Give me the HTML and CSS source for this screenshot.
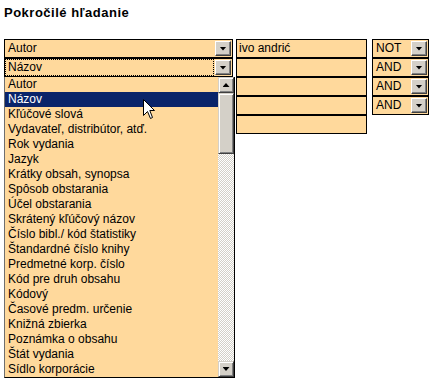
FILE: index.html
```html
<!DOCTYPE html>
<html lang="sk">
<head>
    <meta charset="UTF-8">
    <title>Pokročilé hľadanie</title>
    <link rel="stylesheet" href="styles.css">
</head>
<body>
    <h1 class="title">Pokročilé hľadanie</h1>

    <div class="search-form">
        <div class="col col-fields">
            <div class="select"><span class="select-text">Autor</span><span class="select-btn"><i class="arrow-down"></i></span></div>
            <div class="select select-focus"><span class="select-text">Názov</span><span class="select-btn"><i class="arrow-down"></i></span></div>

            <!-- open dropdown of the second select -->
            <div class="listbox">
                <ul class="options">
                    <li>Autor</li>
                    <li class="selected">Názov</li>
                    <li>Kľúčové slová</li>
                    <li>Vydavateľ, distribútor, atď.</li>
                    <li>Rok vydania</li>
                    <li>Jazyk</li>
                    <li>Krátky obsah, synopsa</li>
                    <li>Spôsob obstarania</li>
                    <li>Účel obstarania</li>
                    <li>Skrátený kľúčový názov</li>
                    <li>Číslo bibl./ kód štatistiky</li>
                    <li>Štandardné číslo knihy</li>
                    <li>Predmetné korp. číslo</li>
                    <li>Kód pre druh obsahu</li>
                    <li>Kódový</li>
                    <li>Časové predm. určenie</li>
                    <li>Knižná zbierka</li>
                    <li>Poznámka o obsahu</li>
                    <li>Štát vydania</li>
                    <li>Sídlo korporácie</li>
                </ul>
                <div class="scrollbar">
                    <span class="scroll-btn"><i class="arrow-up"></i></span>
                    <span class="scroll-thumb"></span>
                    <span class="scroll-track"></span>
                    <span class="scroll-btn"><i class="arrow-down"></i></span>
                </div>
            </div>

            <svg class="cursor" width="12" height="20" viewBox="0 0 12 20">
                <path d="M0.5 0.5 L0.5 16.5 L4.5 12.5 L7.5 19.5 L9.5 18.5 L6.8 11.5 L11.5 11.5 Z" fill="#fff" stroke="#000" stroke-width="1"/>
            </svg>
        </div>

        <div class="col col-terms">
            <div class="term">ivo andrić</div>
            <div class="term"></div>
            <div class="term"></div>
            <div class="term"></div>
            <div class="term"></div>
        </div>

        <div class="col col-ops">
            <div class="select"><span class="select-text">NOT</span><span class="select-btn"><i class="arrow-down"></i></span></div>
            <div class="select"><span class="select-text">AND</span><span class="select-btn"><i class="arrow-down"></i></span></div>
            <div class="select"><span class="select-text">AND</span><span class="select-btn"><i class="arrow-down"></i></span></div>
            <div class="select"><span class="select-text">AND</span><span class="select-btn"><i class="arrow-down"></i></span></div>
        </div>
    </div>
</body>
</html>
```

FILE: styles.css
```css
body {
    margin: 0;
    padding: 5px 4px 0;
    background: #ffffff;
    color: #000;
    font-family: 'Liberation Sans', Arial, sans-serif;
    font-size: 12px;
}
.title {
    margin: 0 0 18px;
    font-size: 13px;
    line-height: 16px;
    font-weight: bold;
    letter-spacing: 0.5px;
}
.search-form {
    display: flex;
    align-items: flex-start;
}
.col {
    display: flex;
    flex-direction: column;
}
.col-fields {
    position: relative;
    width: 229px;
    align-items: flex-start;
}
.col-fields .select {
    width: 100%;
}
.col-terms {
    width: 131px;
    margin-left: 3px;
}
.col-ops {
    width: 57px;
    margin-left: 5px;
}

/* closed select box */
.select {
    display: flex;
    height: 19px;
    box-sizing: border-box;
    border: 1px solid #000;
    background: #ffd99c;
}
.select-text {
    flex: 1;
    padding-left: 3px;
    line-height: 17px;
    white-space: nowrap;
    overflow: hidden;
}
.select-focus .select-text {
    outline: 1px dotted #000;
    outline-offset: -1px;
}
.select-btn {
    display: flex;
    align-items: center;
    justify-content: center;
    width: 16px;
    height: 15px;
    margin: 1px;
    box-sizing: border-box;
    background: #d4d0c8;
    border: 1px solid;
    border-color: #fff #404040 #404040 #fff;
    box-shadow: inset -1px -1px #808080;
}
.arrow-down,
.arrow-up {
    display: block;
    width: 7px;
    height: 4px;
    background: #000;
}
.arrow-down {
    clip-path: polygon(0 0, 100% 0, 50% 100%);
}
.arrow-up {
    clip-path: polygon(50% 0, 100% 100%, 0 100%);
}

/* text inputs */
.term {
    height: 19px;
    box-sizing: border-box;
    border: 1px solid #000;
    background: #ffd99c;
    padding-left: 2px;
    line-height: 17px;
}

/* open dropdown list */
.listbox {
    display: flex;
    width: 231px;
    box-sizing: border-box;
    border: 1px solid #000;
    border-top: 0;
    border-left-color: #6f6f6f;
    background: #ffd99c;
}
.options {
    flex: 1;
    margin: 0;
    padding: 0;
    list-style: none;
}
.options li {
    height: 15px;
    line-height: 15px;
    padding-left: 3px;
    white-space: nowrap;
}
.options li.selected {
    background: #0a246a;
    color: #fff;
}
.scrollbar {
    display: flex;
    flex-direction: column;
    width: 16px;
}
.scroll-btn,
.scroll-thumb {
    display: flex;
    align-items: center;
    justify-content: center;
    box-sizing: border-box;
    background: #d4d0c8;
    border: 1px solid;
    border-color: #d4d0c8 #404040 #404040 #d4d0c8;
    box-shadow: inset 1px 1px #fff, inset -1px -1px #808080;
}
.scroll-btn {
    height: 16px;
}
.scroll-thumb {
    height: 61px;
}
.scroll-track {
    flex: 1;
    background-color: #fff;
    background-image: conic-gradient(#d4d0c8 25%, #fff 0 50%, #d4d0c8 0 75%, #fff 0);
    background-size: 2px 2px;
}
.cursor {
    position: absolute;
    left: 139px;
    top: 60px;
}
```
